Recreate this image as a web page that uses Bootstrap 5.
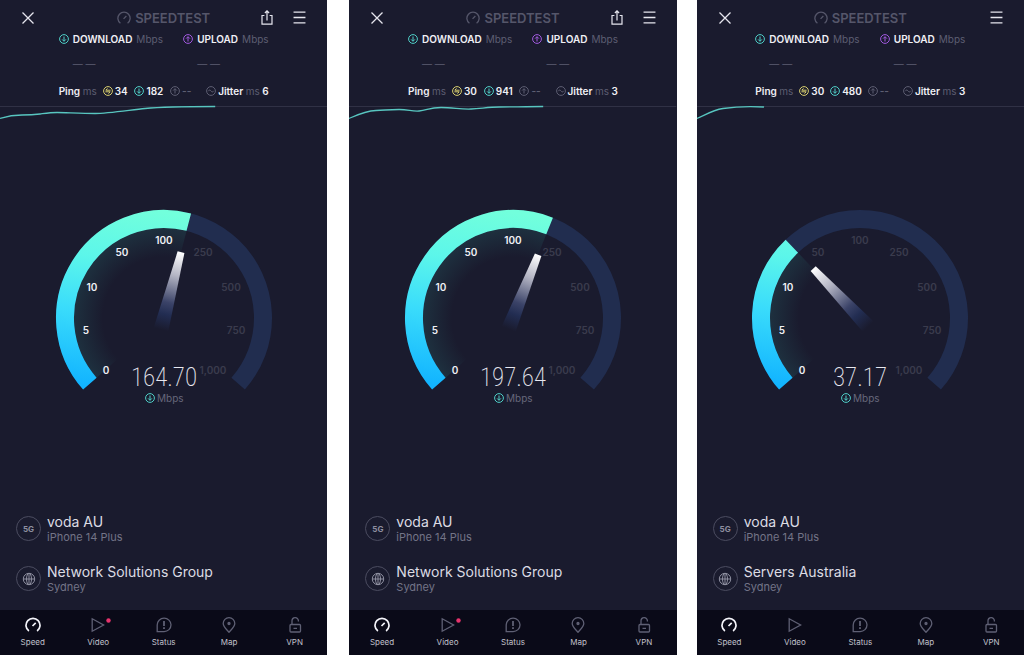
<!DOCTYPE html>
<html lang="en">
<head>
<meta charset="utf-8">
<meta name="viewport" content="width=device-width, initial-scale=1">
<title>Speedtest comparison</title>
<link href="https://cdn.jsdelivr.net/npm/bootstrap@5.3.0/dist/css/bootstrap.min.css" rel="stylesheet">
<style>
body{background:#fff;font-family:Inter,"Noto Sans",sans-serif;font-size:10px;line-height:12px;color:#f0f0f5}
svg{display:block;fill:none;stroke:currentColor;flex-shrink:0}
.phone{flex:1 1 0;min-width:0;background:#1a1b2e}
.phone+.phone{margin-left:22px}
.phone+.phone:last-child{margin-left:20px}
.dim{color:#5d5e72}
.teal{color:#50d0c8}
.violet{color:#a35be0}
.gold{color:#d9cf6e}
.topbar{display:grid;grid-template-columns:1fr auto 1fr;align-items:center;height:33px;padding:2px 21px 0}
.brand-name{font-size:13px;line-height:16px;font-weight:600;color:#55566a}
.topbar button{color:#e6e6ee}
.stats{width:210px}
.speeds{height:38px}
.dashes{padding-left:14px;margin-top:13px}
.latency{height:12px;margin-top:14px}
.pair{display:flex;align-items:center;gap:2px}
.trend{height:24px;margin-top:7px}
.dial{width:216px;height:196px;overflow:visible}
.dial text{stroke:none;fill:#f0f0f5;text-anchor:middle;font-size:10px;font-weight:600}
.dial text.off{fill:#3a3b4d}
.dial text.reading{font-family:"Roboto Condensed","Liberation Sans Narrow",Roboto,sans-serif;font-size:25px;font-weight:200;fill:#e8e8f0}
.dial text.unit{fill:#66677b;font-weight:400;text-anchor:start}
.hosts{padding:26px 16px 16px;gap:19px}
.host{gap:6px}
.host-icon{width:25px;height:25px;border:1px solid #4b4c60;color:#8e8fa0;font-size:8px;font-weight:700}
.host-name{font-size:14px;line-height:17px;color:#dcdce4}
.host-note{font-size:11px;line-height:14px;color:#737487}
.tabs{background:#0a0a18;height:45px}
.tabs a{flex:1 1 0;color:#5f6074;padding-top:7px;gap:4px}
.tabs svg{stroke-width:1.3}
.tabs a span{font-size:8px;line-height:10px;color:#c0c0cb}
.tabs a.active{color:#f4f4fa}
</style>
</head>
<body>
<svg width="0" height="0" class="position-absolute" aria-hidden="true">
  <defs>
    <linearGradient id="arcFill" gradientUnits="userSpaceOnUse" x1="90" y1="0" x2="60" y2="180">
      <stop offset="0" stop-color="#72ffdc"/><stop offset=".3" stop-color="#5cf6ea"/><stop offset=".6" stop-color="#3adcfb"/><stop offset="1" stop-color="#12b4ff"/>
    </linearGradient>
    <radialGradient id="glow" gradientUnits="userSpaceOnUse" cx="108" cy="108" r="90">
      <stop offset=".68" stop-color="#235058" stop-opacity="0"/><stop offset="1" stop-color="#235058" stop-opacity=".4"/>
    </radialGradient>
    <linearGradient id="needleFill" gradientUnits="userSpaceOnUse" x1="0" y1="-68" x2="0" y2="12">
      <stop offset="0" stop-color="#fff"/><stop offset=".3" stop-color="#b4b5c4"/><stop offset=".65" stop-color="#3b4368"/><stop offset=".8" stop-color="#222d52"/><stop offset="1" stop-color="#1a1b2e"/>
    </linearGradient>
    <symbol id="i-down" viewBox="0 0 10 10"><circle cx="5" cy="5" r="4.4"/><path d="M5 2.5v4.7M3.1 5.4 5 7.3l1.9-1.9"/></symbol>
    <symbol id="i-up" viewBox="0 0 10 10"><circle cx="5" cy="5" r="4.4"/><path d="M5 7.5V2.8M3.1 4.6 5 2.7l1.9 1.9"/></symbol>
    <symbol id="i-ping" viewBox="0 0 10 10"><circle cx="5" cy="5" r="4.4"/><path d="M7.6 4.2H2.8l1.7-1.8M2.4 5.8h4.8L5.5 7.6"/></symbol>
    <symbol id="i-jitter" viewBox="0 0 10 10"><circle cx="5" cy="5" r="4.4"/><path d="M2.3 5.2c.8-1.6 1.8-1.4 2.7-.2s1.9 1.4 2.7-.2"/></symbol>
    <symbol id="i-close" viewBox="0 0 14 14"><path d="m1.5 1.5 11 11m0-11-11 11" stroke-width="1.3"/></symbol>
    <symbol id="i-share" viewBox="0 0 12 15"><path d="M3.4 5.5H1v8.6h10V5.5H8.6M6 10.5V1M3.9 3 6 .9 8.1 3" stroke-width="1.2"/></symbol>
    <symbol id="i-menu" viewBox="0 0 12 12"><path d="M.5 1h11M.5 6h11M.5 11h11" stroke-width="1.3"/></symbol>
    <symbol id="i-gauge" viewBox="0 0 16 16"><path d="M3.9 14A7 7 0 1 1 12.1 14M7.5 9l3.2-3.2"/></symbol>
    <symbol id="i-globe" viewBox="0 0 14 14"><circle cx="7" cy="7" r="5.7"/><ellipse cx="7" cy="7" rx="2.5" ry="5.7"/><path d="M1.3 7h11.4M7 1.3v11.4"/></symbol>
    <symbol id="i-play" viewBox="0 0 16 16"><path d="M2.2 1.8v12.4L13.6 8Z"/></symbol>
    <symbol id="i-status" viewBox="0 0 16 16"><path d="M1.2 14.6V8A6.9 6.7 0 1 1 8.1 14.6Z"/><path d="M8 4v5M8 10.2v1.7" stroke-width="1.8"/></symbol>
    <symbol id="i-map" viewBox="0 0 16 16"><path d="M8 15.200C5 11.800 2.200 9.400 2.200 6.500a5.800 5.800 0 0 1 11.600 0C13.800 9.400 11 11.800 8 15.200Z"/><circle cx="8" cy="6.500" r="1" fill="currentColor"/></symbol>
    <symbol id="i-lock" viewBox="0 0 16 16"><rect x="3" y="7.500" width="10.500" height="7.500" rx="1"/><path d="M5 7.500V4a3.200 3.200 0 0 1 6.400-.3v.8M6.500 11.300h3.500"/></symbol>
  </defs>
</svg>

<div class="d-flex min-vh-100">

  <section class="phone d-flex flex-column">
    <header class="topbar">
      <button type="button" class="btn p-0 border-0 d-flex" aria-label="Close"><svg width="14" height="14"><use href="#i-close"/></svg></button>
      <div class="brand-name d-flex align-items-center gap-1"><svg width="14" height="14"><use href="#i-gauge" stroke-width="1.5"/></svg>SPEEDTEST</div>
      <div class="d-flex justify-content-end align-items-center gap-3">
        <button type="button" class="btn p-0 border-0 me-1" aria-label="Share"><svg width="12" height="15"><use href="#i-share"/></svg></button>
        <button type="button" class="btn p-0 border-0" aria-label="Menu"><svg width="13" height="13"><use href="#i-menu"/></svg></button>
      </div>
    </header>
    <div class="stats mx-auto">
      <div class="speeds d-flex justify-content-between">
        <div><div class="d-flex align-items-center gap-1"><svg class="teal" width="10" height="10"><use href="#i-down"/></svg><b class="fw-semibold">DOWNLOAD</b><span class="dim">Mbps</span></div><div class="dashes dim">— —</div></div>
        <div><div class="d-flex align-items-center gap-1"><svg class="violet" width="10" height="10"><use href="#i-up"/></svg><b class="fw-semibold">UPLOAD</b><span class="dim">Mbps</span></div><div class="dashes dim">— —</div></div>
      </div>
      <div class="latency d-flex justify-content-between fw-semibold">
        <div class="pair"><span class="me-1">Ping <span class="dim fw-normal">ms</span></span><svg class="gold" width="10" height="10"><use href="#i-ping"/></svg>34</div>
        <div class="pair"><svg class="teal" width="10" height="10"><use href="#i-down"/></svg>182</div>
        <div class="pair dim"><svg width="10" height="10"><use href="#i-up"/></svg>--</div>
        <div class="pair ms-2"><svg class="dim" width="10" height="10"><use href="#i-jitter"/></svg><span>Jitter <span class="dim fw-normal">ms</span> 6</span></div>
      </div>
    </div>
    <svg class="trend w-100" viewBox="0 0 327 24" preserveAspectRatio="none"><path d="M0 2.5H327" stroke="#303145"/><path d="M0 14.5C8 12 15 11 22 11S36 10.5 40 10 50 8.5 57 8.5 82 9.5 95 9.5 130 6 145 4.500 190 2.500 215 2.500" stroke="#58c6c0" stroke-width="1.3"/></svg>
    <main class="flex-grow-1 d-flex align-items-center justify-content-center">
      <svg class="dial" viewBox="0 0 216 196" role="img" aria-label="164.70 Mbps">
        <path d="M33.85 173.6A99 99 0 1 1 182.15 173.6" stroke="#212d4f" stroke-width="18"/>
        <path d="M51.83 157.7A75 75 0 0 1 126.8 35.4" stroke="url(#glow)" stroke-width="30"/>
        <path d="M33.85 173.6A99 99 0 0 1 132.8 12.15" stroke="url(#arcFill)" stroke-width="18"/>
        <path d="M-3.5-68h7l4 80h-15Z" transform="translate(108 108) rotate(14.5)" fill="url(#needleFill)" stroke="none"/>
        <text x="50" y="164">0</text><text x="30" y="124">5</text><text x="36" y="81">10</text><text x="66" y="46">50</text><text x="108" y="34">100</text>
        <text class="off" x="147" y="46">250</text><text class="off" x="175" y="81">500</text><text class="off" x="180" y="124">750</text><text class="off" x="157" y="164">1,000</text>
        <text class="reading" x="108" y="176">164.70</text>
        <use href="#i-down" x="89" y="183" width="10" height="10" class="teal"/><text class="unit" x="101" y="192">Mbps</text>
      </svg>
    </main>
    <div class="hosts d-flex flex-column">
      <div class="host d-flex align-items-center"><span class="host-icon rounded-circle d-flex align-items-center justify-content-center">5G</span><div><div class="host-name">voda AU</div><div class="host-note">iPhone 14 Plus</div></div></div>
      <div class="host d-flex align-items-center"><span class="host-icon rounded-circle d-flex align-items-center justify-content-center"><svg width="14" height="14"><use href="#i-globe"/></svg></span><div><div class="host-name">Network Solutions Group</div><div class="host-note">Sydney</div></div></div>
    </div>
    <nav class="tabs d-flex" aria-label="Main">
      <a href="#" class="active d-flex flex-column align-items-center text-decoration-none"><svg width="16" height="16"><use href="#i-gauge" stroke-width="1.7"/></svg><span>Speed</span></a>
      <a href="#" class="d-flex flex-column align-items-center text-decoration-none"><svg width="16" height="16" overflow="visible"><use href="#i-play"/><circle cx="18.5" cy="3.5" r="2.2" fill="#e8336d" stroke="none"/></svg><span>Video</span></a>
      <a href="#" class="d-flex flex-column align-items-center text-decoration-none"><svg width="16" height="16"><use href="#i-status"/></svg><span>Status</span></a>
      <a href="#" class="d-flex flex-column align-items-center text-decoration-none"><svg width="16" height="16"><use href="#i-map"/></svg><span>Map</span></a>
      <a href="#" class="d-flex flex-column align-items-center text-decoration-none"><svg width="16" height="16"><use href="#i-lock"/></svg><span>VPN</span></a>
    </nav>
  </section>

  <section class="phone d-flex flex-column">
    <header class="topbar">
      <button type="button" class="btn p-0 border-0 d-flex" aria-label="Close"><svg width="14" height="14"><use href="#i-close"/></svg></button>
      <div class="brand-name d-flex align-items-center gap-1"><svg width="14" height="14"><use href="#i-gauge" stroke-width="1.5"/></svg>SPEEDTEST</div>
      <div class="d-flex justify-content-end align-items-center gap-3">
        <button type="button" class="btn p-0 border-0 me-1" aria-label="Share"><svg width="12" height="15"><use href="#i-share"/></svg></button>
        <button type="button" class="btn p-0 border-0" aria-label="Menu"><svg width="13" height="13"><use href="#i-menu"/></svg></button>
      </div>
    </header>
    <div class="stats mx-auto">
      <div class="speeds d-flex justify-content-between">
        <div><div class="d-flex align-items-center gap-1"><svg class="teal" width="10" height="10"><use href="#i-down"/></svg><b class="fw-semibold">DOWNLOAD</b><span class="dim">Mbps</span></div><div class="dashes dim">— —</div></div>
        <div><div class="d-flex align-items-center gap-1"><svg class="violet" width="10" height="10"><use href="#i-up"/></svg><b class="fw-semibold">UPLOAD</b><span class="dim">Mbps</span></div><div class="dashes dim">— —</div></div>
      </div>
      <div class="latency d-flex justify-content-between fw-semibold">
        <div class="pair"><span class="me-1">Ping <span class="dim fw-normal">ms</span></span><svg class="gold" width="10" height="10"><use href="#i-ping"/></svg>30</div>
        <div class="pair"><svg class="teal" width="10" height="10"><use href="#i-down"/></svg>941</div>
        <div class="pair dim"><svg width="10" height="10"><use href="#i-up"/></svg>--</div>
        <div class="pair ms-2"><svg class="dim" width="10" height="10"><use href="#i-jitter"/></svg><span>Jitter <span class="dim fw-normal">ms</span> 3</span></div>
      </div>
    </div>
    <svg class="trend w-100" viewBox="0 0 327 24" preserveAspectRatio="none"><path d="M0 2.5H327" stroke="#303145"/><path d="M0 14.5C8 11 16 7 27 6.5S40 5.500 50 5.500 62 7.500 70 7 80 3.500 92 3.500 112 5.500 122 5 140 3 150 3 180 2.500 194 2.500" stroke="#58c6c0" stroke-width="1.3"/></svg>
    <main class="flex-grow-1 d-flex align-items-center justify-content-center">
      <svg class="dial" viewBox="0 0 216 196" role="img" aria-label="197.64 Mbps">
        <path d="M33.85 173.6A99 99 0 1 1 182.15 173.6" stroke="#212d4f" stroke-width="18"/>
        <path d="M51.83 157.7A75 75 0 0 1 135.7 38.3" stroke="url(#glow)" stroke-width="30"/>
        <path d="M33.85 173.6A99 99 0 0 1 144.6 16" stroke="url(#arcFill)" stroke-width="18"/>
        <path d="M-3.5-68h7l4 80h-15Z" transform="translate(108 108) rotate(21.7)" fill="url(#needleFill)" stroke="none"/>
        <text x="50" y="164">0</text><text x="30" y="124">5</text><text x="36" y="81">10</text><text x="66" y="46">50</text><text x="108" y="34">100</text>
        <text class="off" x="147" y="46">250</text><text class="off" x="175" y="81">500</text><text class="off" x="180" y="124">750</text><text class="off" x="157" y="164">1,000</text>
        <text class="reading" x="108" y="176">197.64</text>
        <use href="#i-down" x="89" y="183" width="10" height="10" class="teal"/><text class="unit" x="101" y="192">Mbps</text>
      </svg>
    </main>
    <div class="hosts d-flex flex-column">
      <div class="host d-flex align-items-center"><span class="host-icon rounded-circle d-flex align-items-center justify-content-center">5G</span><div><div class="host-name">voda AU</div><div class="host-note">iPhone 14 Plus</div></div></div>
      <div class="host d-flex align-items-center"><span class="host-icon rounded-circle d-flex align-items-center justify-content-center"><svg width="14" height="14"><use href="#i-globe"/></svg></span><div><div class="host-name">Network Solutions Group</div><div class="host-note">Sydney</div></div></div>
    </div>
    <nav class="tabs d-flex" aria-label="Main">
      <a href="#" class="active d-flex flex-column align-items-center text-decoration-none"><svg width="16" height="16"><use href="#i-gauge" stroke-width="1.7"/></svg><span>Speed</span></a>
      <a href="#" class="d-flex flex-column align-items-center text-decoration-none"><svg width="16" height="16" overflow="visible"><use href="#i-play"/><circle cx="18.5" cy="3.5" r="2.2" fill="#e8336d" stroke="none"/></svg><span>Video</span></a>
      <a href="#" class="d-flex flex-column align-items-center text-decoration-none"><svg width="16" height="16"><use href="#i-status"/></svg><span>Status</span></a>
      <a href="#" class="d-flex flex-column align-items-center text-decoration-none"><svg width="16" height="16"><use href="#i-map"/></svg><span>Map</span></a>
      <a href="#" class="d-flex flex-column align-items-center text-decoration-none"><svg width="16" height="16"><use href="#i-lock"/></svg><span>VPN</span></a>
    </nav>
  </section>

  <section class="phone d-flex flex-column">
    <header class="topbar">
      <button type="button" class="btn p-0 border-0 d-flex" aria-label="Close"><svg width="14" height="14"><use href="#i-close"/></svg></button>
      <div class="brand-name d-flex align-items-center gap-1"><svg width="14" height="14"><use href="#i-gauge" stroke-width="1.5"/></svg>SPEEDTEST</div>
      <div class="d-flex justify-content-end align-items-center">
        <button type="button" class="btn p-0 border-0" aria-label="Menu"><svg width="13" height="13"><use href="#i-menu"/></svg></button>
      </div>
    </header>
    <div class="stats mx-auto">
      <div class="speeds d-flex justify-content-between">
        <div><div class="d-flex align-items-center gap-1"><svg class="teal" width="10" height="10"><use href="#i-down"/></svg><b class="fw-semibold">DOWNLOAD</b><span class="dim">Mbps</span></div><div class="dashes dim">— —</div></div>
        <div><div class="d-flex align-items-center gap-1"><svg class="violet" width="10" height="10"><use href="#i-up"/></svg><b class="fw-semibold">UPLOAD</b><span class="dim">Mbps</span></div><div class="dashes dim">— —</div></div>
      </div>
      <div class="latency d-flex justify-content-between fw-semibold">
        <div class="pair"><span class="me-1">Ping <span class="dim fw-normal">ms</span></span><svg class="gold" width="10" height="10"><use href="#i-ping"/></svg>30</div>
        <div class="pair"><svg class="teal" width="10" height="10"><use href="#i-down"/></svg>480</div>
        <div class="pair dim"><svg width="10" height="10"><use href="#i-up"/></svg>--</div>
        <div class="pair ms-2"><svg class="dim" width="10" height="10"><use href="#i-jitter"/></svg><span>Jitter <span class="dim fw-normal">ms</span> 3</span></div>
      </div>
    </div>
    <svg class="trend w-100" viewBox="0 0 327 24" preserveAspectRatio="none"><path d="M0 2.5H327" stroke="#303145"/><path d="M0 14.5C10 10 16 6 26 4.500S50 2 67 3" stroke="#58c6c0" stroke-width="1.3"/></svg>
    <main class="flex-grow-1 d-flex align-items-center justify-content-center">
      <svg class="dial" viewBox="0 0 216 196" role="img" aria-label="37.17 Mbps">
        <path d="M33.85 173.6A99 99 0 1 1 182.15 173.6" stroke="#212d4f" stroke-width="18"/>
        <path d="M51.83 157.7A75 75 0 0 1 56.4 53.6" stroke="url(#glow)" stroke-width="30"/>
        <path d="M33.85 173.6A99 99 0 0 1 39.85 36.2" stroke="url(#arcFill)" stroke-width="18"/>
        <path d="M-3.5-68h7l4 80h-15Z" transform="translate(108 108) rotate(-43.5)" fill="url(#needleFill)" stroke="none"/>
        <text x="50" y="164">0</text><text x="30" y="124">5</text><text x="36" y="81">10</text><text class="off" x="66" y="46">50</text><text class="off" x="108" y="34">100</text>
        <text class="off" x="147" y="46">250</text><text class="off" x="175" y="81">500</text><text class="off" x="180" y="124">750</text><text class="off" x="157" y="164">1,000</text>
        <text class="reading" x="108" y="176">37.17</text>
        <use href="#i-down" x="89" y="183" width="10" height="10" class="teal"/><text class="unit" x="101" y="192">Mbps</text>
      </svg>
    </main>
    <div class="hosts d-flex flex-column">
      <div class="host d-flex align-items-center"><span class="host-icon rounded-circle d-flex align-items-center justify-content-center">5G</span><div><div class="host-name">voda AU</div><div class="host-note">iPhone 14 Plus</div></div></div>
      <div class="host d-flex align-items-center"><span class="host-icon rounded-circle d-flex align-items-center justify-content-center"><svg width="14" height="14"><use href="#i-globe"/></svg></span><div><div class="host-name">Servers Australia</div><div class="host-note">Sydney</div></div></div>
    </div>
    <nav class="tabs d-flex" aria-label="Main">
      <a href="#" class="active d-flex flex-column align-items-center text-decoration-none"><svg width="16" height="16"><use href="#i-gauge" stroke-width="1.7"/></svg><span>Speed</span></a>
      <a href="#" class="d-flex flex-column align-items-center text-decoration-none"><svg width="16" height="16"><use href="#i-play"/></svg><span>Video</span></a>
      <a href="#" class="d-flex flex-column align-items-center text-decoration-none"><svg width="16" height="16"><use href="#i-status"/></svg><span>Status</span></a>
      <a href="#" class="d-flex flex-column align-items-center text-decoration-none"><svg width="16" height="16"><use href="#i-map"/></svg><span>Map</span></a>
      <a href="#" class="d-flex flex-column align-items-center text-decoration-none"><svg width="16" height="16"><use href="#i-lock"/></svg><span>VPN</span></a>
    </nav>
  </section>

</div>
<script src="https://cdn.jsdelivr.net/npm/bootstrap@5.3.0/dist/js/bootstrap.bundle.min.js"></script>
</body>
</html>
